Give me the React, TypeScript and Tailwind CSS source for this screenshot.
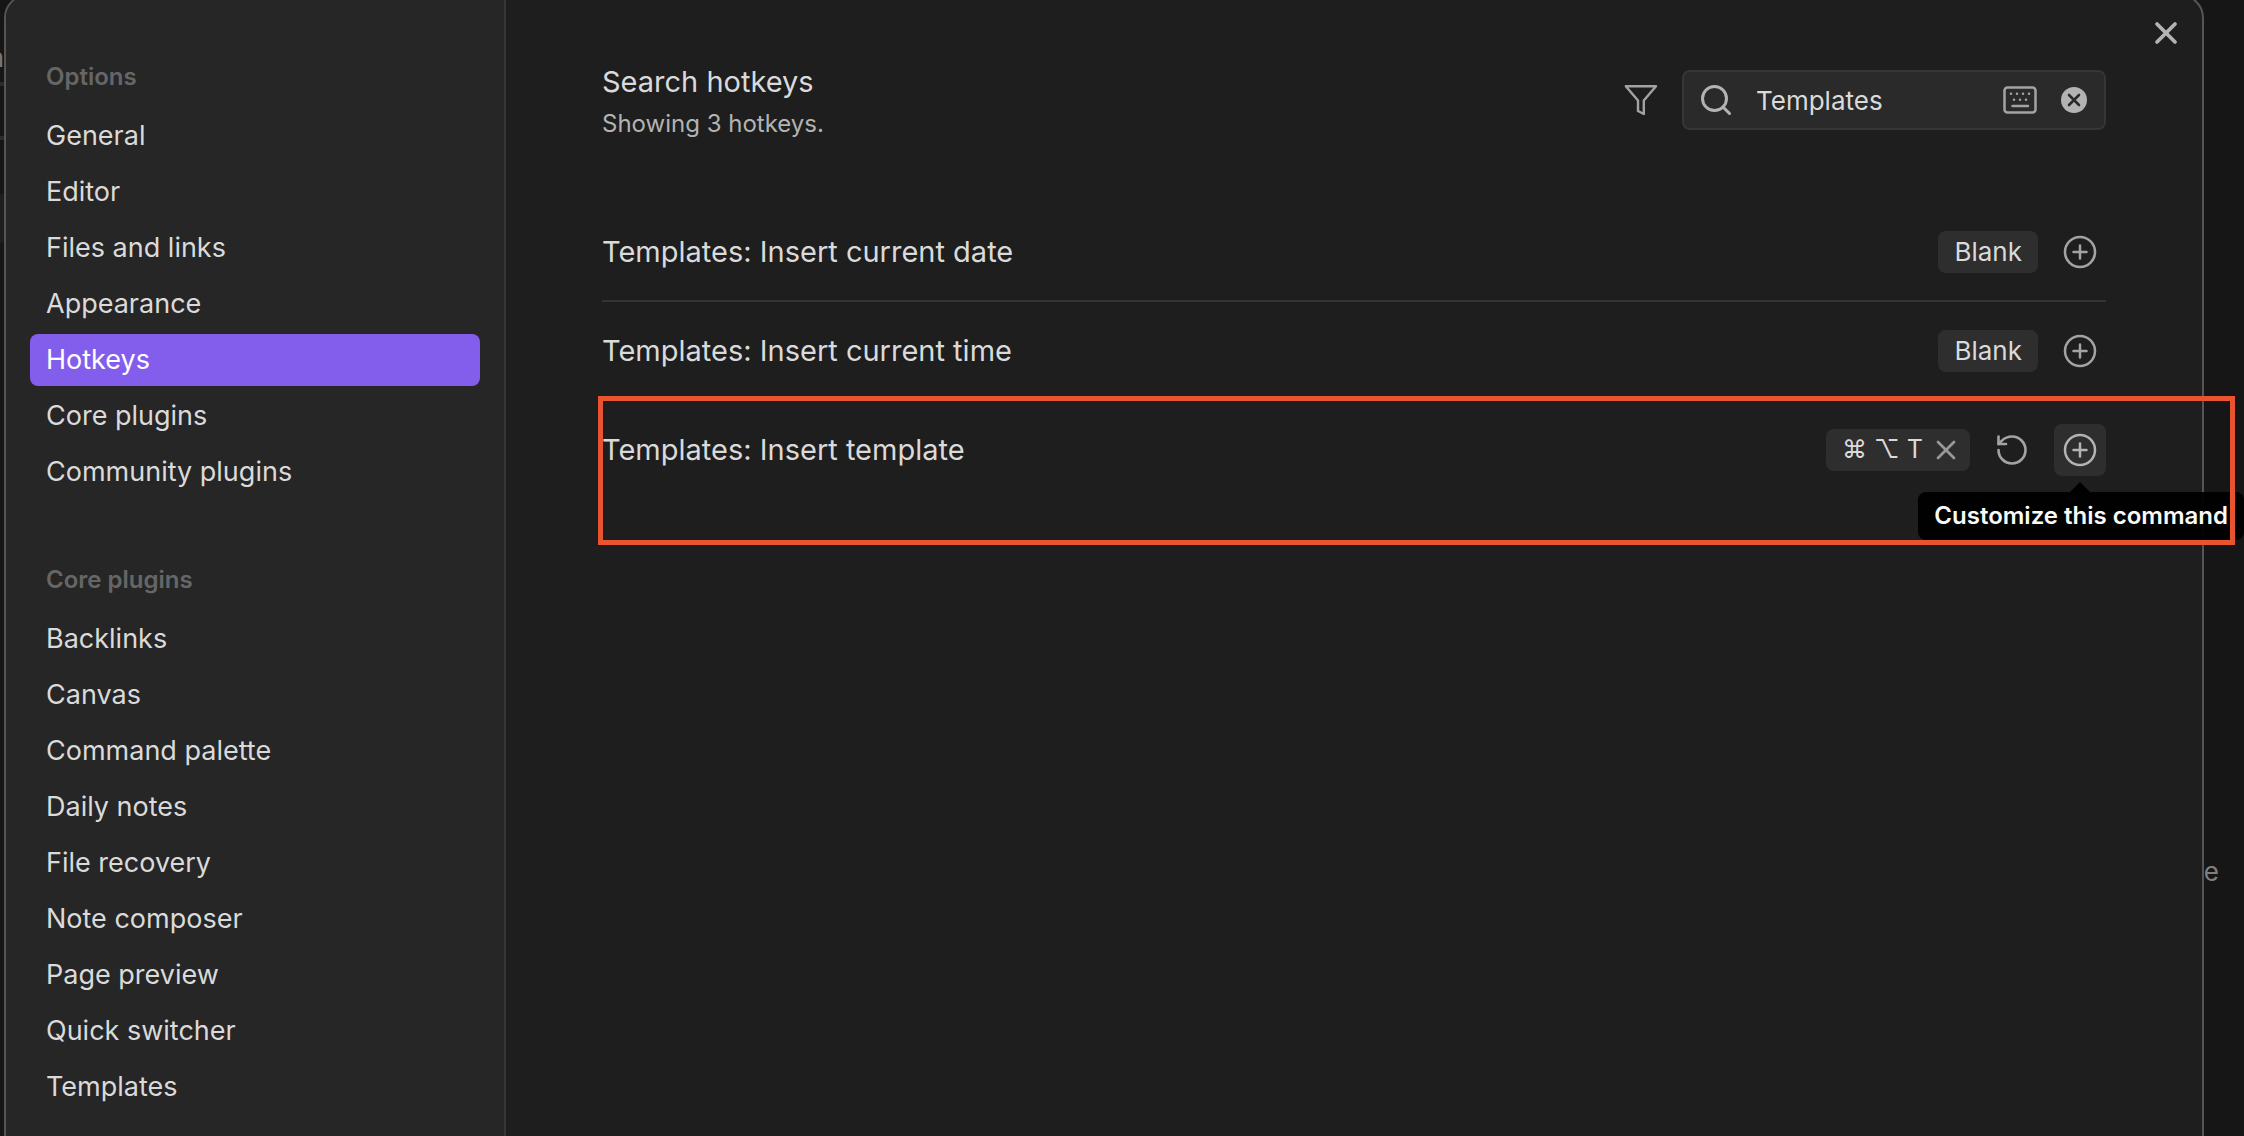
import { RotateCcw, Search, X } from 'lucide-react';

const optionTabs = [
    'General',
    'Editor',
    'Files and links',
    'Appearance',
    'Hotkeys',
    'Core plugins',
    'Community plugins',
];

const corePluginTabs = [
    'Backlinks',
    'Canvas',
    'Command palette',
    'Daily notes',
    'File recovery',
    'Note composer',
    'Page preview',
    'Quick switcher',
    'Templates',
];

const activeTab = 'Hotkeys';

function NavGroup({ title, tabs }: { title: string; tabs: string[] }) {
    return (
        <section>
            <h2 className="px-4 text-[24px] leading-8 font-semibold text-[#666666]">{title}</h2>
            <ul className="mt-[17px] flex flex-col gap-1">
                {tabs.map((tab) => (
                    <li key={tab}>
                        <button
                            type="button"
                            className={
                                tab === activeTab
                                    ? 'flex h-[52px] w-full items-center rounded-lg bg-[#835eec] px-4 text-[27px] text-white'
                                    : 'flex h-[52px] w-full items-center rounded-lg px-4 text-[27px] text-[#dadada]'
                            }
                        >
                            {tab}
                        </button>
                    </li>
                ))}
            </ul>
        </section>
    );
}

function FilterIcon() {
    return (
        <svg className="h-[34px] w-9" viewBox="0 0 36 34" fill="none" stroke="currentColor" strokeWidth="2.4" strokeLinejoin="round">
            <path d="M3.8 3.2H34L21.8 17.5V31L16 28V17.5Z" />
        </svg>
    );
}

function KeyboardIcon() {
    return (
        <svg className="h-7 w-[34px]" viewBox="0 0 34 28" fill="none" stroke="currentColor" strokeWidth="2.5" strokeLinecap="round">
            <rect x="1.5" y="1.5" width="31" height="25" rx="3" />
            <path d="M8 7.8h.01M14 7.8h.01M20 7.8h.01M26 7.8h.01M11 13.8h.01M17 13.8h.01M23 13.8h.01M9.5 20h15.500" />
        </svg>
    );
}

function ClearIcon() {
    return (
        <svg className="h-[26px] w-[26px]" viewBox="0 0 26 26" fill="none">
            <circle cx="13" cy="13" r="13" fill="currentColor" />
            <path d="M8 8l10 10M18 8L8 18" stroke="#2a2a2a" strokeWidth="2.6" strokeLinecap="round" />
        </svg>
    );
}

function PlusCircleIcon() {
    return (
        <svg className="h-[34px] w-[34px]" viewBox="0 0 34 34" fill="none" stroke="currentColor" strokeWidth="2.5" strokeLinecap="round">
            <circle cx="17" cy="17" r="15" />
            <path d="M17 10.500v13M10.500 17h13" />
        </svg>
    );
}

function AddButton({ active }: { active?: boolean }) {
    return (
        <button
            type="button"
            aria-label="Customize this command"
            className={
                active
                    ? 'flex h-[52px] w-[52px] items-center justify-center rounded-lg bg-[#2e2e2e] text-[#b3b3b3]'
                    : 'flex h-[52px] w-[52px] items-center justify-center rounded-lg text-[#a3a3a3]'
            }
        >
            <PlusCircleIcon />
        </button>
    );
}

function BlankRow({ name }: { name: string }) {
    return (
        <li className="flex h-[99px] items-center justify-between border-b-2 border-[#333333]">
            <span className="text-[29px] text-[#dadada]">{name}</span>
            <div className="flex items-center gap-4">
                <span className="flex h-[42px] items-center rounded-lg bg-[#2e2e2e] px-4 text-[26px] text-[#dadada]">Blank</span>
                <AddButton />
            </div>
        </li>
    );
}

export default function App() {
    return (
        <div className="relative flex min-h-screen overflow-hidden bg-[#161616] font-['Inter',sans-serif]">
            {/* Parts of the workspace that show beside the dialog */}
            <span className="absolute top-[38px] right-full -mr-[4px] text-[26px] text-[#777777]">n</span>
            <span className="absolute top-[852px] right-[25px] text-[26px] text-[#808080]">e</span>
            <div className="absolute top-[82px] left-0 h-[58px] w-1 border-y-4 border-[#2c2c2c]"></div>
            <div className="absolute top-[194px] left-0 h-[49px] w-1 bg-[#1e1e1e]"></div>

            <div
                role="dialog"
                aria-label="Settings"
                className="relative -mt-[6px] mr-10 -mb-8 ml-1 flex flex-1 rounded-[24px] border-2 border-[#555555] bg-[#1e1e1e]"
            >
                <nav className="flex w-[500px] shrink-0 flex-col gap-[66px] rounded-l-[22px] border-r-2 border-[#363636] bg-[#262626] pt-[65px] pr-6 pl-6">
                    <NavGroup title="Options" tabs={optionTabs} />
                    <NavGroup title="Core plugins" tabs={corePluginTabs} />
                </nav>

                <main className="flex-1 px-24 pt-[66px]">
                    <header className="flex items-start justify-between">
                        <div>
                            <h1 className="text-[29px] leading-10 text-[#dadada]">Search hotkeys</h1>
                            <p className="text-[24px] leading-[44px] text-[#b3b3b3]">Showing 3 hotkeys.</p>
                        </div>
                        <div className="flex items-center gap-6 pt-2">
                            <button type="button" aria-label="Filter" className="text-[#a3a3a3]">
                                <FilterIcon />
                            </button>
                            <div className="flex h-[60px] w-[424px] items-center rounded-lg border-2 border-[#363636] bg-[#2a2a2a] pr-[17px] pl-[14px] text-[#b3b3b3]">
                                <Search className="h-9 w-9 shrink-0" strokeWidth={2} />
                                <input
                                    aria-label="Search hotkeys"
                                    defaultValue="Templates"
                                    className="ml-[22px] w-0 flex-1 bg-transparent text-[26px] text-[#dadada] outline-none"
                                />
                                <button type="button" aria-label="Filter by hotkey" className="text-[#a3a3a3]">
                                    <KeyboardIcon />
                                </button>
                                <button type="button" aria-label="Clear search" className="ml-6">
                                    <ClearIcon />
                                </button>
                            </div>
                        </div>
                    </header>

                    <ul className="mt-[57px]">
                        <BlankRow name="Templates: Insert current date" />
                        <BlankRow name="Templates: Insert current time" />
                        <li className="relative flex h-[97px] items-center justify-between">
                            <span className="text-[29px] text-[#dadada]">Templates: Insert template</span>
                            <div className="flex items-center gap-4">
                                <span className="flex h-[42px] w-36 items-center justify-between rounded-lg bg-[#2e2e2e] pr-2 pl-4 text-[25px] text-[#dadada]">
                                    <kbd className="font-['Inter','DejaVu_Sans',sans-serif]">⌘ ⌥ T</kbd>
                                    <button type="button" aria-label="Remove hotkey" className="text-[#999999]">
                                        <X className="h-8 w-8" strokeWidth={2} />
                                    </button>
                                </span>
                                <button type="button" aria-label="Restore default" className="flex h-[52px] w-[52px] items-center justify-center text-[#a3a3a3]">
                                    <RotateCcw className="h-9 w-9" strokeWidth={1.75} />
                                </button>
                                <AddButton active />
                            </div>

                            <div
                                role="tooltip"
                                className="absolute top-[91px] -right-[138px] flex h-12 items-center rounded-lg bg-black/95 px-4 text-[24px] font-semibold whitespace-nowrap text-[#fafafa]"
                            >
                                <svg className="absolute -top-[10px] left-[152px] h-[10px] w-5" viewBox="0 0 20 10">
                                    <path d="M0 10 10 0l10 10z" />
                                </svg>
                                Customize this command
                            </div>
                            <div className="pointer-events-none absolute -top-[5px] -right-[129px] -left-1 h-[149px] border-[5px] border-[#ea532f]"></div>
                        </li>
                    </ul>
                </main>

                <button type="button" aria-label="Close" className="absolute top-[19px] right-[18px] text-[#b3b3b3]">
                    <X className="h-9 w-9" strokeWidth={2.5} />
                </button>
            </div>
        </div>
    );
}
